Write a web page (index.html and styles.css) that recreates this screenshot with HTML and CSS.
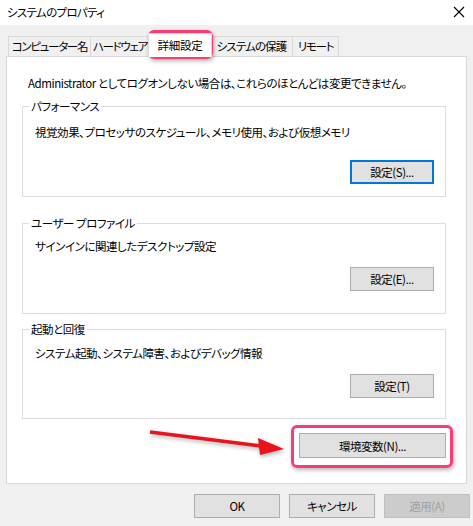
FILE: index.html
```html
<!DOCTYPE html>
<html lang="ja">
<head>
    <meta charset="UTF-8">
    <title>システムのプロパティ</title>
    <link rel="stylesheet" href="styles.css">
</head>
<body>
    <div class="dialog">
        <div class="titlebar">
            <span class="title">システムのプロパティ</span>
            <svg class="close" width="12" height="12" viewBox="0 0 12 12">
                <path d="M1 1 L11 11 M11 1 L1 11" stroke="#000" stroke-width="1.1" fill="none"/>
            </svg>
        </div>

        <div class="tabs">
            <div class="tab tab-name">コンピューター名</div>
            <div class="tab tab-hw">ハードウェア</div>
            <div class="tab tab-adv active">詳細設定</div>
            <div class="tab tab-prot">システムの保護</div>
            <div class="tab tab-remote">リモート</div>
        </div>

        <div class="panel">
            <p class="note">Administrator としてログオンしない場合は、これらのほとんどは変更できません。</p>

            <fieldset class="group group-perf">
                <legend>パフォーマンス</legend>
                <p class="desc">視覚効果、プロセッサのスケジュール、メモリ使用、および仮想メモリ</p>
                <div class="row"><button class="btn btn-default">設定(S)...</button></div>
            </fieldset>

            <fieldset class="group group-user">
                <legend>ユーザー プロファイル</legend>
                <p class="desc">サインインに関連したデスクトップ設定</p>
                <div class="row"><button class="btn">設定(E)...</button></div>
            </fieldset>

            <fieldset class="group group-boot">
                <legend>起動と回復</legend>
                <p class="desc">システム起動、システム障害、およびデバッグ情報</p>
                <div class="row"><button class="btn">設定(T)</button></div>
            </fieldset>

            <div class="row env-row"><button class="btn btn-env">環境変数(N)...</button></div>
        </div>

        <div class="actions">
            <button class="btn btn-action">OK</button>
            <button class="btn btn-action">キャンセル</button>
            <button class="btn btn-action" disabled>適用(A)</button>
        </div>

        <!-- highlight marks drawn over the dialog -->
        <div class="mark mark-tab"></div>
        <div class="mark mark-env"></div>
        <svg class="arrow" width="150" height="40" viewBox="0 0 150 40">
            <line x1="5" y1="7" x2="116" y2="21" stroke="#e8141c" stroke-width="3.5"/>
            <polygon points="113,13 139,24 115,30" fill="#e8141c"/>
        </svg>
    </div>
</body>
</html>
```

FILE: styles.css
```css
body {
    margin: 0;
    font-family: "Noto Sans CJK JP", sans-serif;
    font-size: 11.5px;
    letter-spacing: -0.45px;
    font-feature-settings: "palt";
    color: #000;
}

.dialog {
    position: relative;
    width: 473px;
    height: 526px;
    background: #f0f0f0;
    overflow: hidden;
}

/* Title bar */
.titlebar {
    height: 25px;
    background: #fff;
    display: flex;
    align-items: center;
    justify-content: space-between;
    padding: 0 7px 0 7px;
}

.title {
    line-height: 16px;
    margin-top: -2px;
    letter-spacing: -0.7px;
}

.close {
    margin-top: -2px;
    margin-right: 1px;
}

/* Tabs */
.tabs {
    display: flex;
    margin-top: 11px;
    padding-left: 8px;
    height: 20px;
    align-items: flex-end;
}

.tab {
    height: 20px;
    line-height: 18px;
    border: 1px solid #d9d9d9;
    border-bottom: none;
    background: #f0f0f0;
    text-align: center;
    white-space: nowrap;
    letter-spacing: -1.3px;
    margin-left: -1px;
    box-sizing: border-box;
}

.tab-name { width: 83px; margin-left: 0; }
.tab-hw { width: 60px; }
.tab-adv { width: 64px; letter-spacing: -0.2px; }
.tab-prot { width: 83px; letter-spacing: -0.9px; }
.tab-remote { width: 47px; }

.tab.active {
    background: #fff;
    height: 24px;
    line-height: 22px;
    margin-bottom: -1px;
    margin-left: -2px;
    margin-right: -1px;
    position: relative;
    z-index: 1;
}

/* Panel */
.panel {
    margin: 0 6px 0 6px;
    height: 428px;
    box-sizing: border-box;
    background: #fff;
    border: 1px solid #d9d9d9;
    padding: 0 20px 0 15px;
}

.note {
    margin: 18px 0 0 6px;
    line-height: 16px;
}

.group {
    margin: 0;
    border: 1px solid #dcdcdc;
    padding: 0 11px 0 12px;
    box-sizing: border-box;
}

.group legend {
    margin-left: -6px;
    padding: 0 2px;
    line-height: 16px;
}

.desc {
    margin: 0;
    line-height: 16px;
}

.row {
    display: flex;
    justify-content: flex-end;
}

.group-perf { margin-top: 7px; height: 99px; }
.group-perf .desc { margin-top: 10px; }
.group-perf .row { margin-top: 20px; }

.group-user { margin-top: 18px; height: 99px; }
.group-user .desc { margin-top: 7px; }
.group-user .row { margin-top: 13px; }

.group-boot { margin-top: 7px; height: 98px; }
.group-boot .desc { margin-top: 8px; }
.group-boot .row { margin-top: 13px; }

/* Buttons */
.btn {
    font: inherit;
    letter-spacing: inherit;
    font-feature-settings: "palt";
    color: #000;
    background: #e1e1e1;
    border: 1px solid #adadad;
    width: 84px;
    height: 24px;
    padding: 0;
    margin: 0;
    line-height: 20px;
}

.btn-default {
    border: 2px solid #0078d7;
}

.env-row {
    margin-top: 14px;
}

.btn-env {
    width: 147px;
    height: 25px;
}

.actions {
    display: flex;
    justify-content: flex-end;
    gap: 9px;
    margin-top: 10px;
    padding-right: 3px;
}

.btn-action {
    width: 86px;
    height: 24px;
}

.btn:disabled {
    background: #cccccc;
    border-color: #bfbfbf;
    color: #a0a0a0;
}

/* Highlight marks */
.mark {
    position: absolute;
    border: 3px solid #fb3c72;
    border-radius: 6px;
    box-sizing: border-box;
    box-shadow: 1px 2px 4px rgba(0, 0, 0, 0.3);
}

.mark-tab {
    left: 148px;
    top: 30px;
    width: 65px;
    height: 29px;
}

.mark-env {
    left: 291px;
    top: 425px;
    width: 162px;
    height: 43px;
}

.arrow {
    position: absolute;
    left: 145px;
    top: 425px;
    filter: drop-shadow(1px 2px 2px rgba(0, 0, 0, 0.3));
}
```
